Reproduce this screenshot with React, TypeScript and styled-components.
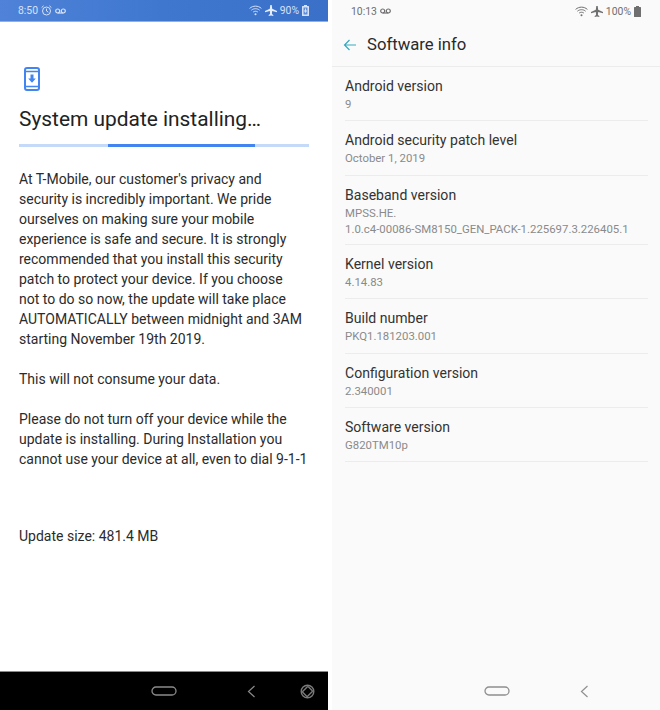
import React from "react";
import styled, { createGlobalStyle } from "styled-components";

const GlobalStyle = createGlobalStyle`
  html, body {
    margin: 0;
    padding: 0;
    background: #fff;
    font-family: Roboto, "Liberation Sans", sans-serif;
  }
  * { box-sizing: border-box; }
`;

const Page = styled.div`
  width: 660px;
  height: 710px;
  display: flex;
  justify-content: space-between;
  overflow: hidden;
`;

const Phone = styled.div<{ $width: number; $bg: string }>`
  width: ${(p) => p.$width}px;
  height: 710px;
  background: ${(p) => p.$bg};
  display: flex;
  flex-direction: column;
`;

const StatusBar = styled.div<{ $light?: boolean }>`
  height: 22px;
  flex: none;
  display: flex;
  align-items: center;
  justify-content: space-between;
  font-size: 10.4px;
  color: ${(p) => (p.$light ? "#d6e2f7" : "#6f6f6f")};
  padding: ${(p) => (p.$light ? "0 19px 0 18px" : "0 19px 0 19px")};
  background: ${(p) =>
    p.$light ? "linear-gradient(90deg, #4f82d8 0%, #3f77cf 50%, #3a70c8 100%)" : "transparent"};
  border-bottom: ${(p) => (p.$light ? "1px solid #8fb0e6" : "none")};
`;

const StatusGroup = styled.div`
  display: flex;
  align-items: center;
  gap: 3px;
`;

const Install = styled.div`
  flex: 1;
  padding: 45px 19px 0;
`;

const PhoneIcon = styled.svg`
  display: block;
  margin-left: 5px;
`;

const Title = styled.h1`
  margin: 13px 0 0;
  font-size: 20.9px;
  line-height: 30px;
  font-weight: 400;
  color: #222;
`;

const Progress = styled.div`
  margin-top: 10px;
  height: 3px;
  background: #c5daf9;
  display: flex;
`;

const ProgressFill = styled.div`
  width: 147px;
  height: 3px;
  margin-left: 89px;
  background: #4285f0;
`;

const Body = styled.p<{ $gap: number }>`
  margin: ${(p) => p.$gap}px 0 0;
  font-size: 14px;
  line-height: 20px;
  color: #2b2b2b;
  white-space: nowrap;
`;

const NavBar = styled.div<{ $dark?: boolean }>`
  height: ${(p) => (p.$dark ? 39 : 38)}px;
  flex: none;
  background: ${(p) => (p.$dark ? "#000" : "transparent")};
  border-top: ${(p) => (p.$dark ? "1px solid #8a8a8a" : "none")};
  display: flex;
  align-items: center;
`;

const NavIcons = styled.div<{ $left: number; $gap: number }>`
  display: flex;
  align-items: center;
  gap: ${(p) => p.$gap}px;
  margin-left: ${(p) => p.$left}px;
`;

const Header = styled.div`
  height: 45px;
  flex: none;
  display: flex;
  align-items: center;
  gap: 10px;
  padding: 1px 0 0 11px;
  font-size: 16.7px;
  color: #2a2a2a;
  border-bottom: 1px solid #ececec;
`;

const List = styled.div`
  flex: 1;
  padding: 0 12px 0 13px;
`;

const Row = styled.div`
  padding-top: 10px;
  height: 54.4px;
  border-bottom: 1px solid #ececec;
`;

const TallRow = styled(Row)`
  height: 69px;
`;

const RowTitle = styled.div`
  font-size: 14.05px;
  line-height: 19px;
  color: #333;
`;

const RowValue = styled.div`
  font-size: 11.4px;
  line-height: 16px;
  color: #8a8a8a;
  white-space: nowrap;
`;

const Wifi = ({ color }: { color: string }) => (
  <svg width="13" height="11" viewBox="0 0 13 11" fill="none" stroke={color} strokeWidth="1">
    <path d="M.6 3.400C4 .4 9 .4 12.400 3.400" />
    <path d="M2.400 5.200c2.400-2 5.800-2 8.200 0" />
    <path d="M4.200 7c1.400-1 3.200-1 4.600 0" />
    <circle cx="6.500" cy="9.200" r="1" fill={color} stroke="none" />
  </svg>
);

const Plane = ({ color }: { color: string }) => (
  <svg width="12" height="11" viewBox="0 0 12 11" fill={color}>
    <path d="M5.300 0h1.400l.5 3.800L12 6v1.200L7.200 6l-.3 3 1.400 1v1L6 10.400 3.700 11v-1l1.400-1-.3-3L0 7.200V6l4.800-2.200z" />
  </svg>
);

const Voicemail = ({ color }: { color: string }) => (
  <svg width="11" height="6" viewBox="0 0 11 6" fill="none" stroke={color} strokeWidth="1.200">
    <circle cx="2.700" cy="3" r="2" />
    <circle cx="8.300" cy="3" r="2" />
    <path d="M2.700 5h5.600" />
  </svg>
);

const Alarm = ({ color }: { color: string }) => (
  <svg width="11" height="11" viewBox="0 0 11 11" fill="none" stroke={color} strokeWidth="1">
    <circle cx="5.500" cy="6" r="4" />
    <path d="M5.500 3.600V6l1.800 1.200M.6 2.600 2.600.8M10.400 2.600 8.400.8" />
  </svg>
);

const ChargingBattery = ({ color }: { color: string }) => (
  <svg width="7" height="11" viewBox="0 0 7 11" fill={color}>
    <path d="M2 0h3v1h1.400c.3 0 .6.3.6.6v8.800c0 .3-.3.6-.6.6H.6c-.3 0-.6-.3-.6-.6V1.600c0-.3.3-.6.6-.6H2z" />
    <path d="M1.500 2.500h4v7h-4z" fill="#5f8dd8" />
    <path d="M3 3.500h1v2h1.200L3.500 8 1.800 5.500H3z" fill={color} />
  </svg>
);

const Battery = ({ color }: { color: string }) => (
  <svg width="7" height="11" viewBox="0 0 7 11" fill={color}>
    <path d="M2 0h3v1h1.400c.3 0 .6.3.6.6v8.800c0 .3-.3.6-.6.6H.6c-.3 0-.6-.3-.6-.6V1.600c0-.3.3-.6.6-.6H2z" />
  </svg>
);

const HomeKey = ({ color }: { color: string }) => (
  <svg width="26" height="10" viewBox="0 0 26 10" fill="none" stroke={color} strokeWidth="1.300">
    <rect x="1" y="1" width="24" height="8" rx="4" />
  </svg>
);

const BackKey = ({ color }: { color: string }) => (
  <svg width="9" height="13" viewBox="0 0 9 13" fill="none" stroke={color} strokeWidth="1.200">
    <path d="M7.500 1 1.500 6.500l6 5.500" />
  </svg>
);

const RotateKey = ({ color }: { color: string }) => (
  <svg width="15" height="15" viewBox="0 0 15 15" fill="none" stroke={color} strokeWidth="1.400">
    <circle cx="7.500" cy="7.500" r="6.300" />
    <rect x="4" y="3.500" width="7" height="8" rx="1" transform="rotate(45 7.500 7.500)" />
  </svg>
);

const rows = [
  { title: "Android version", value: ["9"] },
  { title: "Android security patch level", value: ["October 1, 2019"] },
  { title: "Baseband version", value: ["MPSS.HE.", "1.0.c4-00086-SM8150_GEN_PACK-1.225697.3.226405.1"] },
  { title: "Kernel version", value: ["4.14.83"] },
  { title: "Build number", value: ["PKQ1.181203.001"] },
  { title: "Configuration version", value: ["2.340001"] },
  { title: "Software version", value: ["G820TM10p"] },
];

export default function App() {
  return (
    <Page>
      <GlobalStyle />
      <Phone $width={328} $bg="#fff">
        <StatusBar $light>
          <StatusGroup>
            <span>8:50</span>
            <Alarm color="#d6e2f7" />
            <Voicemail color="#d6e2f7" />
          </StatusGroup>
          <StatusGroup>
            <Wifi color="#d6e2f7" />
            <Plane color="#e6eefb" />
            <span>90%</span>
            <ChargingBattery color="#d6e2f7" />
          </StatusGroup>
        </StatusBar>
        <Install>
          <PhoneIcon width="16" height="24" viewBox="0 0 16 24">
            <rect x="1" y="1" width="14" height="22" rx="2" fill="none" stroke="#4285f0" strokeWidth="2" />
            <path d="M1 4.500h14M1 19.500h14" stroke="#4285f0" strokeWidth="1.500" />
            <path d="M6.500 7.500h3v4h2.300L8 15.800 4.200 11.500h2.300z" fill="#4285f0" />
          </PhoneIcon>
          <Title>System update installing…</Title>
          <Progress>
            <ProgressFill />
          </Progress>
          <Body $gap={22}>
            At T-Mobile, our customer's privacy and
            <br />
            security is incredibly important. We pride
            <br />
            ourselves on making sure your mobile
            <br />
            experience is safe and secure. It is strongly
            <br />
            recommended that you install this security
            <br />
            patch to protect your device. If you choose
            <br />
            not to do so now, the update will take place
            <br />
            AUTOMATICALLY between midnight and 3AM
            <br />
            starting November 19th 2019.
          </Body>
          <Body $gap={20}>This will not consume your data.</Body>
          <Body $gap={20}>
            Please do not turn off your device while the
            <br />
            update is installing. During Installation you
            <br />
            cannot use your device at all, even to dial 9-1-1
          </Body>
          <Body $gap={57}>Update size: 481.4 MB</Body>
        </Install>
        <NavBar $dark>
          <NavIcons $left={151} $gap={70}>
            <HomeKey color="#8a8a8a" />
            <BackKey color="#8a8a8a" />
          </NavIcons>
          <NavIcons $left={44} $gap={0}>
            <RotateKey color="#7a7a7a" />
          </NavIcons>
        </NavBar>
      </Phone>
      <Phone $width={328} $bg="#fafafa">
        <StatusBar>
          <StatusGroup>
            <span>10:13</span>
            <Voicemail color="#6f6f6f" />
          </StatusGroup>
          <StatusGroup>
            <Wifi color="#6f6f6f" />
            <Plane color="#6f6f6f" />
            <span>100%</span>
            <Battery color="#6f6f6f" />
          </StatusGroup>
        </StatusBar>
        <Header>
          <svg width="14" height="12" viewBox="0 0 14 12" fill="none" stroke="#35a9c0" strokeWidth="1.200">
            <path d="M13 6H1.500M6.500 1 1.500 6l5 5" />
          </svg>
          <span>Software info</span>
        </Header>
        <List>
          {rows.map((row) => {
            const RowBox = row.value.length > 1 ? TallRow : Row;
            return (
              <RowBox key={row.title}>
                <RowTitle>{row.title}</RowTitle>
                {row.value.map((line) => (
                  <RowValue key={line}>{line}</RowValue>
                ))}
              </RowBox>
            );
          })}
        </List>
        <NavBar>
          <NavIcons $left={152} $gap={70}>
            <HomeKey color="#8f8f8f" />
            <BackKey color="#8f8f8f" />
          </NavIcons>
        </NavBar>
      </Phone>
    </Page>
  );
}
